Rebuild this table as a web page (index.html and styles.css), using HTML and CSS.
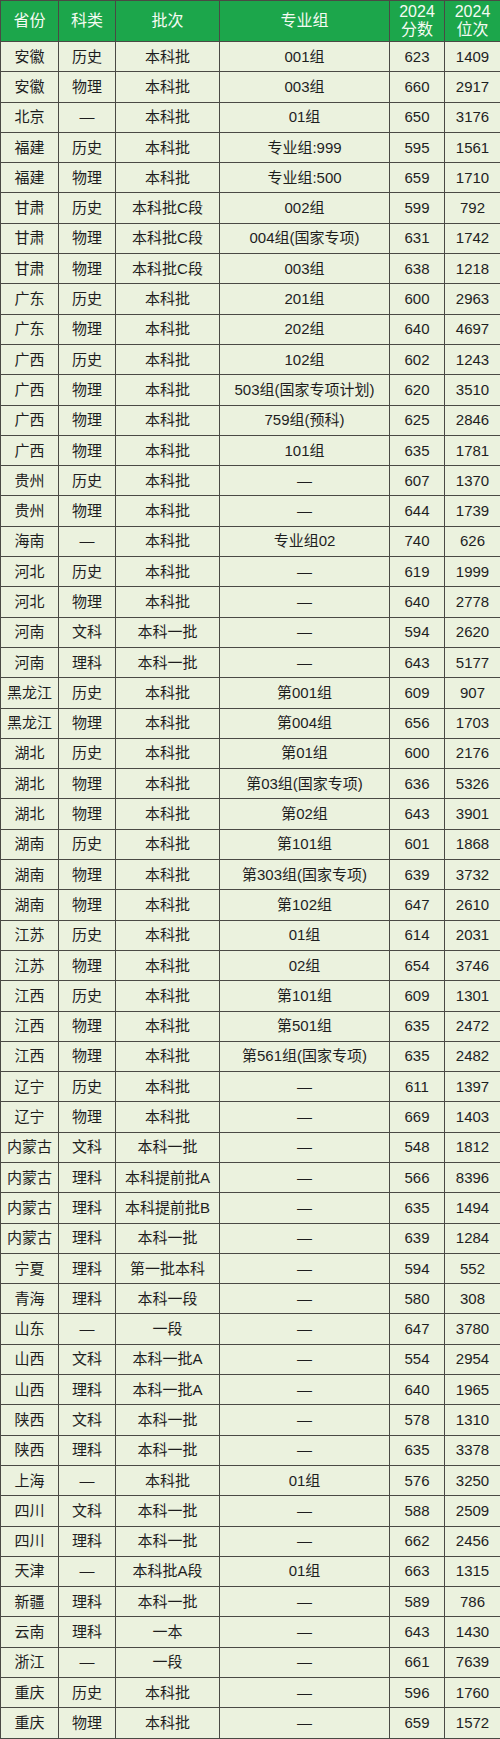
FILE: index.html
```html
<!DOCTYPE html>
<html lang="zh">
<head>
<meta charset="utf-8">
<title>2024分数位次</title>
<link rel="stylesheet" href="styles.css">
</head>
<body>
<table class="score-table">
<colgroup>
<col class="c-prov"><col class="c-type"><col class="c-batch"><col class="c-group"><col class="c-score"><col class="c-rank">
</colgroup>
<thead>
<tr><th>省份</th><th>科类</th><th>批次</th><th>专业组</th><th>2024<br>分数</th><th>2024<br>位次</th></tr>
</thead>
<tbody>
<tr><td>安徽</td><td>历史</td><td>本科批</td><td>001组</td><td>623</td><td>1409</td></tr>
<tr><td>安徽</td><td>物理</td><td>本科批</td><td>003组</td><td>660</td><td>2917</td></tr>
<tr><td>北京</td><td>—</td><td>本科批</td><td>01组</td><td>650</td><td>3176</td></tr>
<tr><td>福建</td><td>历史</td><td>本科批</td><td>专业组:999</td><td>595</td><td>1561</td></tr>
<tr><td>福建</td><td>物理</td><td>本科批</td><td>专业组:500</td><td>659</td><td>1710</td></tr>
<tr><td>甘肃</td><td>历史</td><td>本科批C段</td><td>002组</td><td>599</td><td>792</td></tr>
<tr><td>甘肃</td><td>物理</td><td>本科批C段</td><td>004组(国家专项)</td><td>631</td><td>1742</td></tr>
<tr><td>甘肃</td><td>物理</td><td>本科批C段</td><td>003组</td><td>638</td><td>1218</td></tr>
<tr><td>广东</td><td>历史</td><td>本科批</td><td>201组</td><td>600</td><td>2963</td></tr>
<tr><td>广东</td><td>物理</td><td>本科批</td><td>202组</td><td>640</td><td>4697</td></tr>
<tr><td>广西</td><td>历史</td><td>本科批</td><td>102组</td><td>602</td><td>1243</td></tr>
<tr><td>广西</td><td>物理</td><td>本科批</td><td>503组(国家专项计划)</td><td>620</td><td>3510</td></tr>
<tr><td>广西</td><td>物理</td><td>本科批</td><td>759组(预科)</td><td>625</td><td>2846</td></tr>
<tr><td>广西</td><td>物理</td><td>本科批</td><td>101组</td><td>635</td><td>1781</td></tr>
<tr><td>贵州</td><td>历史</td><td>本科批</td><td>—</td><td>607</td><td>1370</td></tr>
<tr><td>贵州</td><td>物理</td><td>本科批</td><td>—</td><td>644</td><td>1739</td></tr>
<tr><td>海南</td><td>—</td><td>本科批</td><td>专业组02</td><td>740</td><td>626</td></tr>
<tr><td>河北</td><td>历史</td><td>本科批</td><td>—</td><td>619</td><td>1999</td></tr>
<tr><td>河北</td><td>物理</td><td>本科批</td><td>—</td><td>640</td><td>2778</td></tr>
<tr><td>河南</td><td>文科</td><td>本科一批</td><td>—</td><td>594</td><td>2620</td></tr>
<tr><td>河南</td><td>理科</td><td>本科一批</td><td>—</td><td>643</td><td>5177</td></tr>
<tr><td>黑龙江</td><td>历史</td><td>本科批</td><td>第001组</td><td>609</td><td>907</td></tr>
<tr><td>黑龙江</td><td>物理</td><td>本科批</td><td>第004组</td><td>656</td><td>1703</td></tr>
<tr><td>湖北</td><td>历史</td><td>本科批</td><td>第01组</td><td>600</td><td>2176</td></tr>
<tr><td>湖北</td><td>物理</td><td>本科批</td><td>第03组(国家专项)</td><td>636</td><td>5326</td></tr>
<tr><td>湖北</td><td>物理</td><td>本科批</td><td>第02组</td><td>643</td><td>3901</td></tr>
<tr><td>湖南</td><td>历史</td><td>本科批</td><td>第101组</td><td>601</td><td>1868</td></tr>
<tr><td>湖南</td><td>物理</td><td>本科批</td><td>第303组(国家专项)</td><td>639</td><td>3732</td></tr>
<tr><td>湖南</td><td>物理</td><td>本科批</td><td>第102组</td><td>647</td><td>2610</td></tr>
<tr><td>江苏</td><td>历史</td><td>本科批</td><td>01组</td><td>614</td><td>2031</td></tr>
<tr><td>江苏</td><td>物理</td><td>本科批</td><td>02组</td><td>654</td><td>3746</td></tr>
<tr><td>江西</td><td>历史</td><td>本科批</td><td>第101组</td><td>609</td><td>1301</td></tr>
<tr><td>江西</td><td>物理</td><td>本科批</td><td>第501组</td><td>635</td><td>2472</td></tr>
<tr><td>江西</td><td>物理</td><td>本科批</td><td>第561组(国家专项)</td><td>635</td><td>2482</td></tr>
<tr><td>辽宁</td><td>历史</td><td>本科批</td><td>—</td><td>611</td><td>1397</td></tr>
<tr><td>辽宁</td><td>物理</td><td>本科批</td><td>—</td><td>669</td><td>1403</td></tr>
<tr><td>内蒙古</td><td>文科</td><td>本科一批</td><td>—</td><td>548</td><td>1812</td></tr>
<tr><td>内蒙古</td><td>理科</td><td>本科提前批A</td><td>—</td><td>566</td><td>8396</td></tr>
<tr><td>内蒙古</td><td>理科</td><td>本科提前批B</td><td>—</td><td>635</td><td>1494</td></tr>
<tr><td>内蒙古</td><td>理科</td><td>本科一批</td><td>—</td><td>639</td><td>1284</td></tr>
<tr><td>宁夏</td><td>理科</td><td>第一批本科</td><td>—</td><td>594</td><td>552</td></tr>
<tr><td>青海</td><td>理科</td><td>本科一段</td><td>—</td><td>580</td><td>308</td></tr>
<tr><td>山东</td><td>—</td><td>一段</td><td>—</td><td>647</td><td>3780</td></tr>
<tr><td>山西</td><td>文科</td><td>本科一批A</td><td>—</td><td>554</td><td>2954</td></tr>
<tr><td>山西</td><td>理科</td><td>本科一批A</td><td>—</td><td>640</td><td>1965</td></tr>
<tr><td>陕西</td><td>文科</td><td>本科一批</td><td>—</td><td>578</td><td>1310</td></tr>
<tr><td>陕西</td><td>理科</td><td>本科一批</td><td>—</td><td>635</td><td>3378</td></tr>
<tr><td>上海</td><td>—</td><td>本科批</td><td>01组</td><td>576</td><td>3250</td></tr>
<tr><td>四川</td><td>文科</td><td>本科一批</td><td>—</td><td>588</td><td>2509</td></tr>
<tr><td>四川</td><td>理科</td><td>本科一批</td><td>—</td><td>662</td><td>2456</td></tr>
<tr><td>天津</td><td>—</td><td>本科批A段</td><td>01组</td><td>663</td><td>1315</td></tr>
<tr><td>新疆</td><td>理科</td><td>本科一批</td><td>—</td><td>589</td><td>786</td></tr>
<tr><td>云南</td><td>理科</td><td>一本</td><td>—</td><td>643</td><td>1430</td></tr>
<tr><td>浙江</td><td>—</td><td>一段</td><td>—</td><td>661</td><td>7639</td></tr>
<tr><td>重庆</td><td>历史</td><td>本科批</td><td>—</td><td>596</td><td>1760</td></tr>
<tr><td>重庆</td><td>物理</td><td>本科批</td><td>—</td><td>659</td><td>1572</td></tr>
</tbody>
</table>
</body>
</html>
```
FILE: styles.css
```css
html, body {
  margin: 0;
  padding: 0;
  background: #ffffff;
}
.score-table {
  width: 500px;
  table-layout: fixed;
  border-collapse: collapse;
  font-family: "Liberation Sans", "Noto Sans CJK SC", sans-serif;
  font-size: 15px;
  color: #1e1e1e;
}
.c-prov { width: 58px; }
.c-type { width: 57px; }
.c-batch { width: 104px; }
.c-group { width: 170px; }
.c-score { width: 55px; }
.c-rank { width: 56px; }
.score-table th,
.score-table td {
  border: 1px solid #4a4a44;
  text-align: center;
  padding: 0;
  white-space: nowrap;
  overflow: hidden;
}
.score-table th {
  background: #1ca64b;
  color: #f4fbf2;
  font-weight: normal;
  height: 40px;
  line-height: 18px;
  font-size: 16px;
}
.score-table td {
  background: #ebf2de;
  height: 29.3px;
  line-height: 18px;
}
```
